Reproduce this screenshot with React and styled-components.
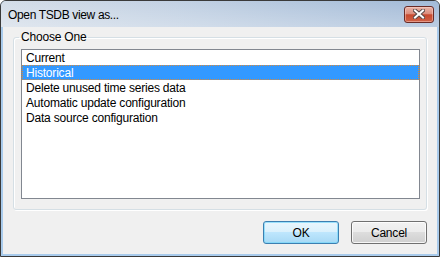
import React from "react";
import styled, { createGlobalStyle } from "styled-components";

const GlobalStyle = createGlobalStyle`
  html, body {
    margin: 0;
    padding: 0;
    background: #ffffff;
  }
  body {
    font-family: "Liberation Sans", Arial, sans-serif;
    font-size: 12px;
    color: #000;
  }
`;

const Window = styled.div`
  width: 440px;
  height: 257px;
  box-sizing: border-box;
  border: 1px solid #3a3a3a;
  border-radius: 6px 6px 0 0;
  background: #a9cbec;
  display: flex;
  flex-direction: column;
  overflow: hidden;
`;

const TitleBar = styled.div`
  height: 26px;
  flex: none;
  display: flex;
  align-items: center;
  padding: 0 5px 0 7px;
  background: linear-gradient(
      to bottom,
      rgba(255, 255, 255, 0) 0%,
      rgba(255, 255, 255, 0.28) 100%
    ),
    linear-gradient(to right, #d4dde8 0%, #c2d1e3 40%, #a2bad7 100%);
`;

const Title = styled.div`
  flex: 1;
  letter-spacing: -0.35px;
  line-height: 16px;
  padding-top: 1px;
`;

const CloseButton = styled.button`
  width: 30px;
  height: 17px;
  padding: 0;
  box-sizing: border-box;
  border: 1px solid #6a2b26;
  border-radius: 3px;
  display: flex;
  align-items: center;
  justify-content: center;
  background: linear-gradient(
    to bottom,
    #e9b4a8 0%,
    #dc8d7c 45%,
    #c7492e 52%,
    #cf6247 100%
  );
  box-shadow: inset 0 0 0 1px rgba(255, 220, 210, 0.45);
`;

const Client = styled.div`
  flex: 1;
  margin: 0 2px 2px;
  background: #f0f0f0;
  padding: 3px 10px 10px 10px;
  display: flex;
  flex-direction: column;
`;

const Group = styled.fieldset`
  margin: 0;
  padding: 5px 6px 10px 7px;
  min-width: 0;
  border: 1px solid #d5dfe5;
  border-radius: 3px;
  box-shadow: inset 1px 1px 0 #ffffff, 1px 1px 0 #ffffff;
`;

const Legend = styled.legend`
  padding: 0 2px;
  margin-left: -2px;
  line-height: 14px;
  letter-spacing: -0.2px;
`;

const ListBox = styled.ul`
  list-style: none;
  margin: 0;
  padding: 0;
  height: 150px;
  box-sizing: border-box;
  border: 1px solid #828790;
  background: #ffffff;
`;

const Item = styled.li`
  height: 15px;
  box-sizing: border-box;
  padding: 1px 0 0 3px;
  line-height: 13px;
  letter-spacing: -0.2px;
  white-space: nowrap;
  overflow: visible;
  color: ${(p) => (p.$selected ? "#ffffff" : "#000000")};
  background: ${(p) => (p.$selected ? "#3399ff" : "transparent")};
  border: 1px dotted ${(p) => (p.$selected ? "#d98a3a" : "transparent")};
`;

const Footer = styled.div`
  margin-top: 11px;
  display: flex;
  justify-content: flex-end;
  gap: 12px;
`;

const Button = styled.button`
  width: 76px;
  height: 23px;
  box-sizing: border-box;
  padding: 0;
  font-family: inherit;
  font-size: 12px;
  letter-spacing: -0.2px;
  color: #000;
  border-radius: 3px;
  border: 1px solid ${(p) => (p.$primary ? "#3c7fb1" : "#707070")};
  background: ${(p) =>
    p.$primary
      ? "linear-gradient(to bottom, #eaf6fd 0%, #d9f0fc 50%, #bee6fd 50%, #a7d9f5 100%)"
      : "linear-gradient(to bottom, #f2f2f2 0%, #ebebeb 50%, #dddddd 50%, #cfcfcf 100%)"};
  box-shadow: inset 0 0 0 1px
    ${(p) => (p.$primary ? "rgba(120, 215, 250, 0.7)" : "rgba(255, 255, 255, 0.8)")};
`;

const items = [
  "Current",
  "Historical",
  "Delete unused time series data",
  "Automatic update configuration",
  "Data source configuration",
];

export default function App() {
  return (
    <>
      <GlobalStyle />
      <Window>
        <TitleBar>
          <Title>Open TSDB view as...</Title>
          <CloseButton aria-label="Close">
            <svg width="12" height="10" viewBox="0 0 12 10">
              <path
                d="M2 1.5 L10 8.5 M10 1.5 L2 8.5"
                stroke="#5a4a48"
                strokeWidth="4"
                strokeLinecap="square"
              />
              <path
                d="M2 1.5 L10 8.5 M10 1.5 L2 8.5"
                stroke="#ffffff"
                strokeWidth="2"
                strokeLinecap="square"
              />
            </svg>
          </CloseButton>
        </TitleBar>
        <Client>
          <Group>
            <Legend>Choose One</Legend>
            <ListBox>
              {items.map((label, i) => (
                <Item key={label} $selected={i === 1}>
                  {label}
                </Item>
              ))}
            </ListBox>
          </Group>
          <Footer>
            <Button $primary>OK</Button>
            <Button>Cancel</Button>
          </Footer>
        </Client>
      </Window>
    </>
  );
}
